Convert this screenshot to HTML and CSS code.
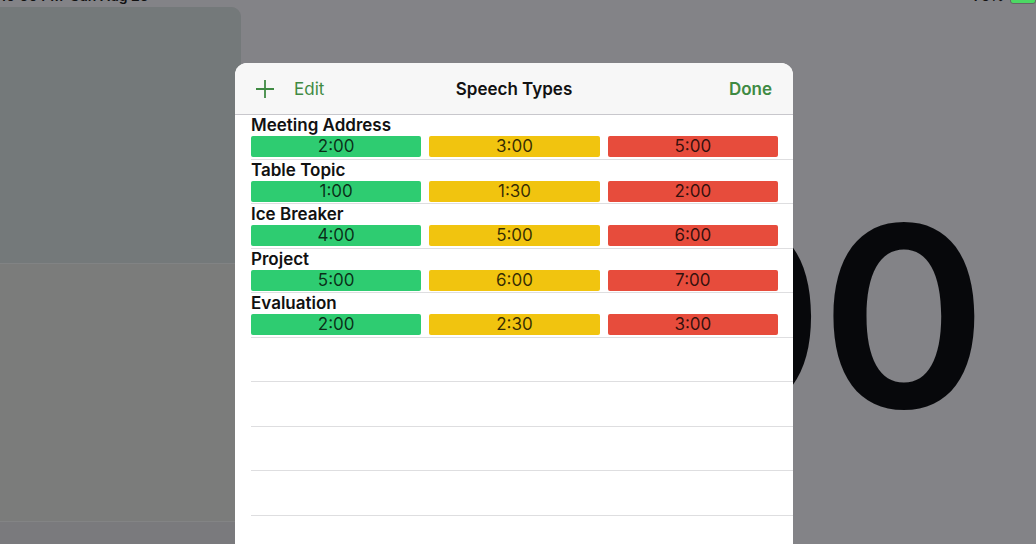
FILE: index.html
```html
<!DOCTYPE html>
<html lang="en">
<head>
  <meta charset="UTF-8" />
  <title>Speech Types</title>
  <link rel="stylesheet" href="styles.css">
</head>
<body>

  <div class="status-bar">
    <span class="status-left">10:50 PM&nbsp;&nbsp;Sun Aug 25</span>
    <span class="status-right">76% <span class="battery"></span></span>
  </div>

  <div class="screen">
    <aside class="sidebar">
      <div class="sidebar-top"></div>
      <div class="sidebar-mid"></div>
    </aside>
    <main class="timer-area">
      <div class="timer">0:00</div>
    </main>
  </div>

  <section class="sheet">
    <header class="sheet-header">
      <div class="header-left">
        <svg class="plus-icon" width="18" height="18" viewBox="0 0 18 18">
          <path d="M9 0 V18 M0 9 H18" stroke="#3f8a43" stroke-width="1.8" fill="none" />
        </svg>
        <span class="nav-btn">Edit</span>
      </div>
      <div class="sheet-title">Speech Types</div>
      <div class="header-right">
        <span class="nav-btn done">Done</span>
      </div>
    </header>

    <div class="type-list">
      <div class="type-row">
        <div class="type-name">Meeting Address</div>
        <div class="bars">
          <div class="bar green">2:00</div>
          <div class="bar yellow">3:00</div>
          <div class="bar red">5:00</div>
        </div>
      </div>
      <div class="type-row">
        <div class="type-name">Table Topic</div>
        <div class="bars">
          <div class="bar green">1:00</div>
          <div class="bar yellow">1:30</div>
          <div class="bar red">2:00</div>
        </div>
      </div>
      <div class="type-row">
        <div class="type-name">Ice Breaker</div>
        <div class="bars">
          <div class="bar green">4:00</div>
          <div class="bar yellow">5:00</div>
          <div class="bar red">6:00</div>
        </div>
      </div>
      <div class="type-row">
        <div class="type-name">Project</div>
        <div class="bars">
          <div class="bar green">5:00</div>
          <div class="bar yellow">6:00</div>
          <div class="bar red">7:00</div>
        </div>
      </div>
      <div class="type-row">
        <div class="type-name">Evaluation</div>
        <div class="bars">
          <div class="bar green">2:00</div>
          <div class="bar yellow">2:30</div>
          <div class="bar red">3:00</div>
        </div>
      </div>
      <div class="type-row"></div>
      <div class="type-row"></div>
      <div class="type-row"></div>
      <div class="type-row"></div>
      <div class="type-row"></div>
    </div>
  </section>

</body>
</html>
```

FILE: styles.css
```css
body {
  margin: 0;
  width: 1036px;
  height: 544px;
  overflow: hidden;
  position: relative;
  background-color: #838387;
  font-family: Inter, "Liberation Sans", sans-serif;
}

/* status bar, mostly cut off at the top */
.status-bar {
  height: 7px;
  overflow: hidden;
  display: flex;
  justify-content: space-between;
  font-size: 14px;
  font-weight: 600;
  color: #111;
}

.status-left,
.status-right {
  margin-top: -11px;
  line-height: 14px;
}

.status-right {
  display: flex;
  gap: 6px;
  align-items: flex-start;
}

.battery {
  width: 24px;
  height: 11px;
  margin-top: 2px;
  border-radius: 3px;
  background-color: #4cd964;
  border: 1px solid #666;
}

.screen {
  display: flex;
  height: 537px;
}

.sidebar {
  width: 241px;
  display: flex;
  flex-direction: column;
  background-color: #7a7a7d;
  border-top-right-radius: 10px;
  overflow: hidden;
}

.sidebar-top {
  height: 256px;
  background-color: #74797a;
  border-bottom: 1px solid #818384;
}

.sidebar-mid {
  height: 257px;
  background-color: #7b7c7b;
  border-bottom: 1px solid #838485;
}

.timer-area {
  flex: 1;
  display: flex;
  justify-content: flex-end;
  padding-top: 184px;
  padding-right: 52px;
}

.timer {
  font-size: 252px;
  font-weight: 600;
  line-height: 1;
  color: #07080b;
  letter-spacing: -3px;
}

/* modal sheet */
.sheet {
  position: absolute;
  left: 235px;
  top: 63px;
  width: 558px;
  height: 520px;
  background-color: #fff;
  border-radius: 12px 12px 0 0;
  overflow: hidden;
}

.sheet-header {
  height: 51px;
  padding: 0 21px;
  display: grid;
  grid-template-columns: 1fr auto 1fr;
  align-items: center;
  background-color: #f7f7f7;
  border-bottom: 1px solid #c8c7cc;
}

.header-left {
  display: flex;
  align-items: center;
  gap: 20px;
}

.header-right {
  display: flex;
  justify-content: flex-end;
}

.nav-btn {
  font-size: 17px;
  color: #3f8a43;
}

.nav-btn.done {
  font-weight: 600;
}

.sheet-title {
  font-size: 17px;
  font-weight: 600;
  color: #111;
}

.type-row {
  height: 43.5px;
  margin-left: 16px;
  padding-right: 15px;
  border-bottom: 1px solid #dedee0;
}

.type-name {
  height: 20px;
  line-height: 20px;
  font-size: 17px;
  font-weight: 600;
  color: #111;
}

.bars {
  margin-top: 1px;
  display: grid;
  grid-template-columns: repeat(3, 1fr);
  gap: 8px;
}

.bar {
  height: 21px;
  line-height: 21px;
  border-radius: 2px;
  text-align: center;
  font-size: 17px;
  color: rgba(0, 0, 0, 0.78);
}

.green {
  background-color: #2ecc71;
}

.yellow {
  background-color: #f1c40f;
}

.red {
  background-color: #e74c3c;
}
```
